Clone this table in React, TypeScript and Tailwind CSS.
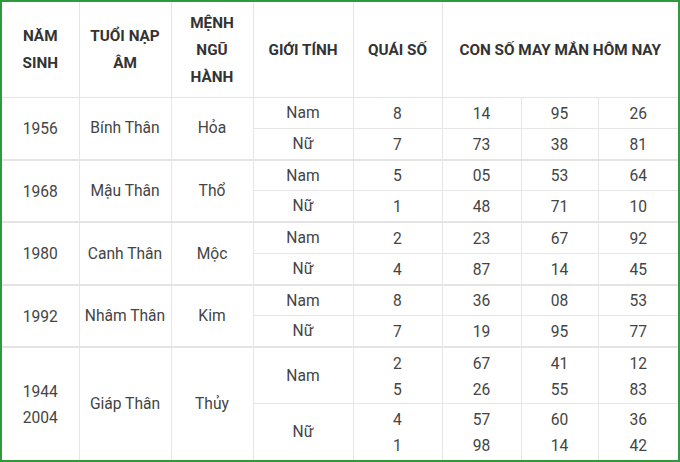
import React from 'react'

type Row = { gender: string; quai: string[]; nums: string[][] }
type Group = { years: string[]; tuoi: string; menh: string; rows: Row[]; tall?: boolean }

const groups: Group[] = [
  {
    years: ['1956'],
    tuoi: 'Bính Thân',
    menh: 'Hỏa',
    rows: [
      { gender: 'Nam', quai: ['8'], nums: [['14', '95', '26']] },
      { gender: 'Nữ', quai: ['7'], nums: [['73', '38', '81']] },
    ],
  },
  {
    years: ['1968'],
    tuoi: 'Mậu Thân',
    menh: 'Thổ',
    rows: [
      { gender: 'Nam', quai: ['5'], nums: [['05', '53', '64']] },
      { gender: 'Nữ', quai: ['1'], nums: [['48', '71', '10']] },
    ],
  },
  {
    years: ['1980'],
    tuoi: 'Canh Thân',
    menh: 'Mộc',
    rows: [
      { gender: 'Nam', quai: ['2'], nums: [['23', '67', '92']] },
      { gender: 'Nữ', quai: ['4'], nums: [['87', '14', '45']] },
    ],
  },
  {
    years: ['1992'],
    tuoi: 'Nhâm Thân',
    menh: 'Kim',
    rows: [
      { gender: 'Nam', quai: ['8'], nums: [['36', '08', '53']] },
      { gender: 'Nữ', quai: ['7'], nums: [['19', '95', '77']] },
    ],
  },
  {
    years: ['1944', '2004'],
    tuoi: 'Giáp Thân',
    menh: 'Thủy',
    tall: true,
    rows: [
      { gender: 'Nam', quai: ['2', '5'], nums: [['67', '41', '12'], ['26', '55', '83']] },
      { gender: 'Nữ', quai: ['4', '1'], nums: [['57', '60', '36'], ['98', '14', '42']] },
    ],
  },
]

const th =
  'border border-[#e4e4e4] px-0 pt-[2px] pb-0 text-center align-middle font-bold text-[15.3px] leading-[27px] text-[#333]'
const td = 'border border-[#e6e6e6] px-0 pt-[2px] pb-0 text-center align-middle text-[15.6px] text-[#444]'

function Lines({ items }: { items: string[] }) {
  return (
    <>
      {items.map((t, i) => (
        <div key={i} className="leading-[26px]">
          {t}
        </div>
      ))}
    </>
  )
}

export default function App() {
  return (
    <div
      className="w-[680px] h-[462px] overflow-hidden border-2 border-[#2f9a3c] bg-white"
      style={{ fontFamily: 'Roboto, "Noto Sans", sans-serif' }}
    >
      <table className="w-full table-fixed border-collapse border-hidden">
        <colgroup>
          <col className="w-[77px]" />
          <col className="w-[92px]" />
          <col className="w-[82px]" />
          <col className="w-[100px]" />
          <col className="w-[89px]" />
          <col className="w-[79px]" />
          <col className="w-[77px]" />
          <col className="w-[80px]" />
        </colgroup>
        <thead>
          <tr className="h-[95px]">
            <th className={th}>
              NĂM
              <br />
              SINH
            </th>
            <th className={th}>
              TUỔI NẠP
              <br />
              ÂM
            </th>
            <th className={th}>
              MỆNH
              <br />
              NGŨ
              <br />
              HÀNH
            </th>
            <th className={th}>GIỚI TÍNH</th>
            <th className={th}>QUÁI SỐ</th>
            <th className={th} colSpan={3}>
              CON SỐ MAY MẮN HÔM NAY
            </th>
          </tr>
        </thead>
        <tbody>
          {groups.map((g) =>
            g.rows.map((r, ri) => (
              <tr
                key={g.tuoi + ri}
                className={
                  (g.tall ? 'h-[56.5px]' : 'h-[31.25px]') +
                  (ri === g.rows.length - 1 ? ' border-b-2 border-b-[#e4e4e4]' : '')
                }
              >
                {ri === 0 && (
                  <>
                    <td className={td} rowSpan={g.rows.length}>
                      <Lines items={g.years} />
                    </td>
                    <td className={td} rowSpan={g.rows.length}>
                      {g.tuoi}
                    </td>
                    <td className={td} rowSpan={g.rows.length}>
                      {g.menh}
                    </td>
                  </>
                )}
                <td className={td}>{r.gender}</td>
                <td className={td}>
                  <Lines items={r.quai} />
                </td>
                {[0, 1, 2].map((c) => (
                  <td key={c} className={td}>
                    <Lines items={r.nums.map((n) => n[c])} />
                  </td>
                ))}
              </tr>
            ))
          )}
        </tbody>
      </table>
    </div>
  )
}
